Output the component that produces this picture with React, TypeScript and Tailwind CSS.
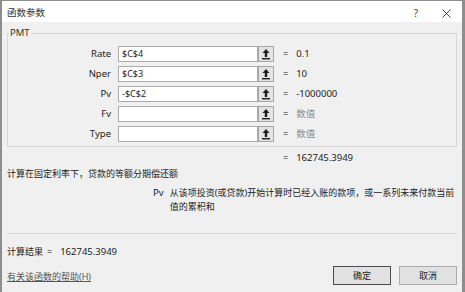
import React from "react";

// ─── Argument rows ────────────────────────────────────────────────────────────

const ARGS: { name: string; ref: string; value: string; muted?: boolean }[] = [
  { name: "Rate", ref: "$C$4", value: "0.1" },
  { name: "Nper", ref: "$C$3", value: "10" },
  { name: "Pv", ref: "-$C$2", value: "-1000000" },
  { name: "Fv", ref: "", value: "数值", muted: true },
  { name: "Type", ref: "", value: "数值", muted: true },
];

function CollapseIcon() {
  return (
    <svg width="10" height="12" viewBox="0 0 10 12">
      <path d="M5 1 L8.5 5 L6.2 5 L6.2 9 L3.8 9 L3.8 5 L1.5 5 Z" fill="#1e1e1e" />
      <rect x="1" y="10" width="8" height="1.4" fill="#1e1e1e" />
    </svg>
  );
}

export default function App() {
  return (
    <div
      className="w-[465px] h-[292px] overflow-hidden bg-[#f0f0f0] border-t border-l-2 border-r-[3px] border-[#8e8e8e] flex flex-col text-[9px] text-[#222]"
      style={{ fontFamily: '"Noto Sans", "Noto Sans CJK SC", sans-serif' }}
    >
      {/* Title bar */}
      <div className="h-[21px] shrink-0 bg-white flex items-center pl-[5px] pt-[3px]">
        <span className="text-[9.5px] text-[#333]">函数参数</span>
        <span className="ml-auto w-[30px] text-center text-[10px] text-[#444]">?</span>
        <span className="w-[30px] flex justify-center mr-[1px]">
          <svg width="9" height="9" viewBox="0 0 9 9">
            <path d="M0.5 0.5 L8.5 8.5 M8.5 0.5 L0.5 8.5" stroke="#333" strokeWidth="0.9" />
          </svg>
        </span>
      </div>

      <div className="px-[5px] flex flex-col">
        {/* Group box */}
        <fieldset className="mt-[5px] border border-[#d7d7d7] pt-[7px] pb-[4px]">
          <legend className="ml-[1px] px-[1px] leading-[12px] text-[9.5px] text-[#333]">PMT</legend>
          <div className="flex flex-col gap-[4px]">
            {ARGS.map((a) => (
              <div key={a.name} className="flex items-center h-[16px]">
                <span className="w-[103px] text-right text-[9.5px]">{a.name}</span>
                <div className="ml-[7px] w-[140px] h-[16px] bg-white border border-[#ababab] flex items-center pl-[3px] text-[9px]">
                  {a.ref}
                </div>
                <div className="w-[16px] h-[16px] bg-[#e3e3e3] border border-[#a6a6a6] flex items-center justify-center">
                  <CollapseIcon />
                </div>
                <span className="ml-[9px] text-[9px]">=</span>
                <span className={`ml-[8px] text-[9.5px] ${a.muted ? "text-[#8d8d8d]" : "text-[#222]"}`}>
                  {a.value}
                </span>
              </div>
            ))}
          </div>
        </fieldset>

        {/* Formula result */}
        <div className="mt-[4px] h-[14px] flex items-center pl-[276px]">
          <span>=</span>
          <span className="ml-[8px] text-[9.5px]">162745.3949</span>
        </div>

        {/* Function description */}
        <div className="mt-[2px] h-[14px] flex items-center">计算在固定利率下，贷款的等额分期偿还额</div>

        {/* Argument description */}
        <div className="mt-[5px] flex pl-[146px]">
          <span className="w-[17px] leading-[14px] text-[9.5px]">Pv</span>
          <p className="w-[290px] leading-[14px]">
            从该项投资(或贷款)开始计算时已经入账的款项，或一系列未来付款当前值的累积和
          </p>
        </div>

        <div className="mt-[19px] h-px bg-[#d6d6d6]" />

        <div className="mt-[11px] h-[14px] flex items-center">
          <span>计算结果</span>
          <span className="ml-[4px]">=</span>
          <span className="ml-[8px] text-[9.5px]">162745.3949</span>
        </div>

        {/* Footer */}
        <div className="mt-[7px] flex items-center">
          <span className="pt-[3px] underline text-[#555]">有关该函数的帮助(H)</span>
          <div className="ml-auto flex gap-[8px]">
            <button className="w-[58px] h-[19px] bg-[#e1e1e1] border border-[#4d4d4d] text-[9px] text-[#222]">
              确定
            </button>
            <button className="w-[58px] h-[19px] bg-[#e1e1e1] border border-[#adadad] text-[9px] text-[#222]">
              取消
            </button>
          </div>
        </div>
      </div>
    </div>
  );
}
